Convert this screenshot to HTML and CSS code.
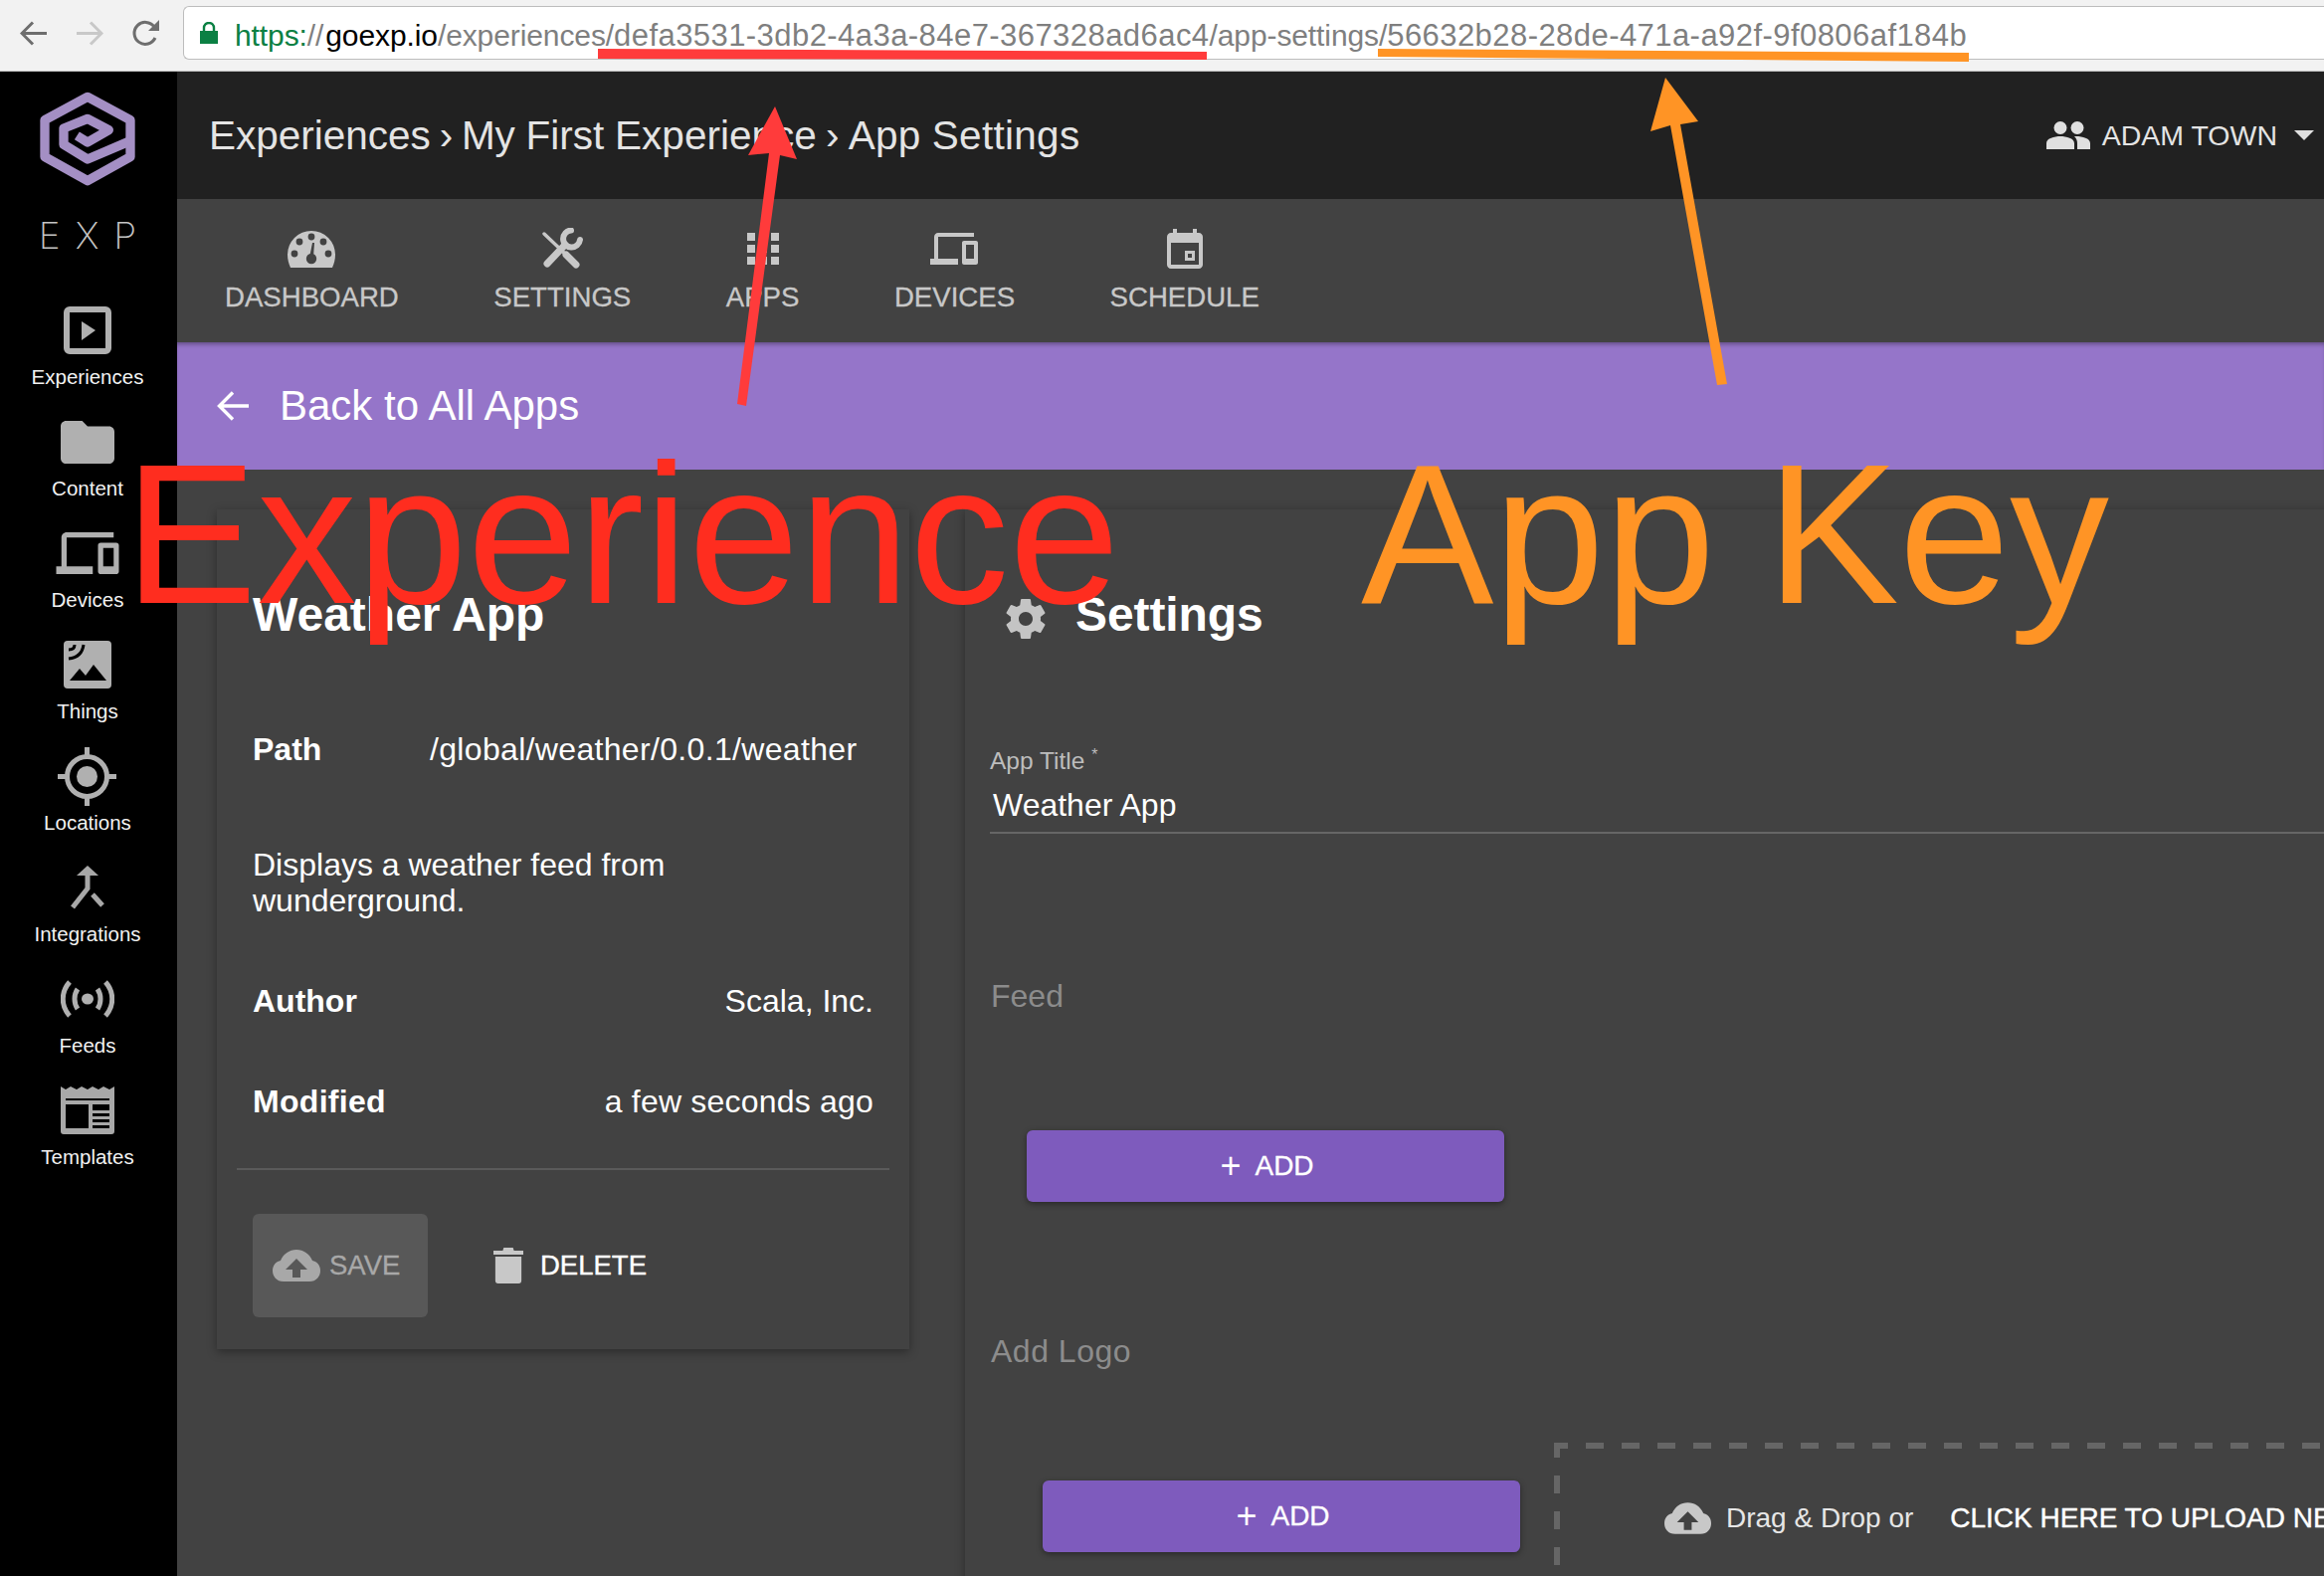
FILE: index.html
```html
<!DOCTYPE html>
<html lang="en">
<head>
<meta charset="utf-8">
<title>App Settings</title>
<link rel="stylesheet" href="styles.css">
</head>
<body>
<div class="page">
  <div class="browser">
    <svg class="nav-icon nav-back" viewBox="0 0 27 25"><path d="M13 1.5 2 12.5l11 11M2 12.5h25" fill="none" stroke="#6e6e6e" stroke-width="3"/></svg>
    <svg class="nav-icon nav-forward" viewBox="0 0 27 25"><path d="M14 1.5l11 11-11 11M25 12.5H0" fill="none" stroke="#c8c8c8" stroke-width="3"/></svg>
    <svg class="nav-icon nav-reload" viewBox="0 0 27 27"><path d="M23 18a11 11 0 1 1-1-11" fill="none" stroke="#6e6e6e" stroke-width="3"/><path d="M27 0v11H16z" fill="#6e6e6e"/></svg>
    <div class="address">
      <svg class="lock" viewBox="0 0 18 22"><path d="M0 9h18v13H0z" fill="#0b8043"/><path d="M4 10V6a5 5 0 0 1 10 0v4" fill="none" stroke="#0b8043" stroke-width="2.4"/></svg>
      <span class="url"><span class="url-green">https:</span>//<span class="url-host">goexp.io</span>/experiences/<span class="uuid">defa3531-3db2-4a3a-84e7-367328ad6ac4</span>/app-settings/<span class="uuid">56632b28-28de-471a-a92f-9f0806af184b</span></span>
    </div>
  </div>

  <div class="app">
    <nav class="sidebar">
      <div class="brand">
        <svg class="logo" viewBox="60 37 288 285"><g fill="none" stroke="#a48fc4" stroke-width="28" stroke-linejoin="round"><path d="M204 53 333 123V234L204 306 75 234V123Z"/><path d="M333 186 204 241 132 197V148L204 119 268 153 204 190 172 170"/></g></svg>
        <div class="brand-name">EXP</div>
      </div>
      <a class="side-item"><span class="side-icon"><svg width="48" height="48" viewBox="0 0 48 48"><rect x="3" y="3" width="42" height="42" rx="3" fill="none" stroke="#b0b0b0" stroke-width="6"/><path d="M18 15l14 9-14 10z" fill="#b0b0b0"/></svg></span><span class="side-label">Experiences</span></a>
      <a class="side-item"><span class="side-icon"><svg width="54" height="43" viewBox="2 4 20 16" preserveAspectRatio="none"><path fill="#b0b0b0" d="M10 4H4c-1.1 0-1.99.9-1.99 2L2 18c0 1.1.9 2 2 2h16c1.1 0 2-.9 2-2V8c0-1.1-.9-2-2-2h-8l-2-2z"/></svg></span><span class="side-label">Content</span></a>
      <a class="side-item"><span class="side-icon"><svg width="64" height="42" viewBox="0 4 24 16"><path fill="#b0b0b0" d="M4 6h18V4H4c-1.1 0-2 .9-2 2v11H0v3h14v-3H4V6zm19 2h-6c-.55 0-1 .45-1 1v10c0 .55.45 1 1 1h6c.55 0 1-.45 1-1V9c0-.55-.45-1-1-1zm-1 9h-4v-7h4v7z"/></svg></span><span class="side-label">Devices</span></a>
      <a class="side-item"><span class="side-icon"><svg width="48" height="48" viewBox="0 0 48 48"><rect width="48" height="48" rx="4" fill="#b0b0b0"/><path d="M6 40 16 28l6 7 8-11 13 16z" fill="#000"/><path d="M5 18C14 17 19 12 20 4M5 9C9 9 11 7 11 4" fill="none" stroke="#000" stroke-width="3"/></svg></span><span class="side-label">Things</span></a>
      <a class="side-item"><span class="side-icon"><svg width="59" height="59" viewBox="0 0 59 59"><circle cx="29.5" cy="29.5" r="20" fill="none" stroke="#b0b0b0" stroke-width="5"/><circle cx="29.5" cy="29.5" r="10.5" fill="#b0b0b0"/><path d="M29.5 0v10M29.5 49v10M0 29.5h10M49 29.5h10" stroke="#b0b0b0" stroke-width="5"/></svg></span><span class="side-label">Locations</span></a>
      <a class="side-item"><span class="side-icon"><svg width="34" height="45" viewBox="0 0 34 45"><path d="M17 0 28 10H6z" fill="#a8a8a8"/><path d="M17 9V23L2 42M22 29l10 11" fill="none" stroke="#a8a8a8" stroke-width="5"/></svg></span><span class="side-label">Integrations</span></a>
      <a class="side-item"><span class="side-icon"><svg width="54" height="38" viewBox="0 0 54 38"><ellipse cx="27" cy="19" rx="6" ry="5.5" fill="#b0b0b0"/><path d="M9 2C0 12 0 26 9 36M45 2C54 12 54 26 45 36M17 9c-4 6-4 14 0 20M37 9c4 6 4 14 0 20" fill="none" stroke="#b0b0b0" stroke-width="5"/></svg></span><span class="side-label">Feeds</span></a>
      <a class="side-item"><span class="side-icon"><svg width="54" height="48" viewBox="0 0 54 48"><path d="M0 0l5 3 5-3 6 3 5-3 6 3 5-3 6 3 5-3 6 3 5-3v45a3 3 0 0 1-3 3H3a3 3 0 0 1-3-3z" fill="#a8a8a8"/><path d="M5 12h44v30H5z" fill="#000"/><path d="M5 14h44v4H5zM28 18h4v24h-4zM32 24h17v3H32zM32 30h17v3H32zM32 36h17v3H32z" fill="#a8a8a8"/></svg></span><span class="side-label">Templates</span></a>
    </nav>

    <main class="main">
      <header class="topbar">
        <div class="crumbs">Experiences <span class="sep">›</span> My First Experience <span class="sep-last">›</span> <span class="crumb-last">App Settings</span></div>
        <div class="user">
          <svg class="user-icon" width="44" height="28" viewBox="0 0 44 28"><circle cx="14" cy="6.5" r="6.5" fill="#e0e0e0"/><circle cx="31" cy="6.5" r="6.5" fill="#e0e0e0"/><path d="M0 28v-6c0-5 8-7 14-7s14 2 14 7v6zM30 15c6 0 14 2 14 7v6H31v-6c0-3-1-5-3-7z" fill="#e0e0e0"/></svg>
          <span>ADAM TOWN</span>
          <span class="caret"></span>
        </div>
      </header>

      <div class="tabs">
        <a class="tab"><span class="tab-icon"><svg width="48" height="38" viewBox="0 0 48 38"><path d="M3 38C1 34 0 29 0 25a24 24 0 0 1 48 0c0 4-1 9-3 13z" fill="#c8c8c8"/><g fill="#424242"><circle cx="24" cy="7" r="3.4"/><circle cx="12" cy="12" r="3.4"/><circle cx="36" cy="12" r="3.4"/><circle cx="7" cy="24" r="3.4"/><circle cx="41" cy="24" r="3.4"/><circle cx="24" cy="29" r="5.2"/><path d="M22 28l3-15h2l-1 15z"/></g></svg></span><span>DASHBOARD</span></a>
        <a class="tab"><span class="tab-icon"><svg width="42" height="42" viewBox="0 0 42 42"><g fill="none" stroke="#c8c8c8" stroke-linecap="round"><path d="M3 6l21 20" stroke-width="3.4"/><path d="M25 27l10 10" stroke-width="7"/><path d="M6 36 24 17" stroke-width="7"/><path d="M30 2.500A8.500 8.500 0 1 0 39 12" stroke-width="6"/></g></svg></span><span>SETTINGS</span></a>
        <a class="tab"><span class="tab-icon"><svg width="32" height="32" viewBox="4 4 16 16"><path fill="#c8c8c8" d="M4 8h4V4H4v4zm6 12h4v-4h-4v4zm-6 0h4v-4H4v4zm0-6h4v-4H4v4zm6 0h4v-4h-4v4zm6-10v4h4V4h-4zm-6 4h4V4h-4v4zm6 6h4v-4h-4v4zm0 6h4v-4h-4v4z"/></svg></span><span>APPS</span></a>
        <a class="tab"><span class="tab-icon"><svg width="48" height="32" viewBox="0 4 24 16"><path fill="#c8c8c8" d="M4 6h18V4H4c-1.1 0-2 .9-2 2v11H0v3h14v-3H4V6zm19 2h-6c-.55 0-1 .45-1 1v10c0 .55.45 1 1 1h6c.55 0 1-.45 1-1V9c0-.55-.45-1-1-1zm-1 9h-4v-7h4v7z"/></svg></span><span>DEVICES</span></a>
        <a class="tab"><span class="tab-icon"><svg width="36" height="40" viewBox="3 1 18 20"><path fill="#c8c8c8" fill-rule="evenodd" d="M17 12h-5v5h5v-5zM15.500 13.500h-2v2h2zM16 1v2H8V1H6v2H5c-1.110 0-1.990.9-1.990 2L3 19c0 1.100.890 2 2 2h14c1.100 0 2-.9 2-2V5c0-1.100-.9-2-2-2h-1V1h-2zm3 18H5V8h14v11z"/></svg></span><span>SCHEDULE</span></a>
      </div>

      <div class="backbar">
        <svg width="32" height="30" viewBox="0 0 32 30"><path d="M16 1.500 2.500 15 16 28.500M3 15h29" fill="none" stroke="#fff" stroke-width="3.400"/></svg>
        <span>Back to All Apps</span>
      </div>

      <div class="content">
        <section class="card">
          <h2 class="card-title">Weather App</h2>
          <div class="row row-path"><b>Path</b><span class="path-value">/global/weather/0.0.1/weather</span></div>
          <p class="desc">Displays a weather feed from<br>wunderground.</p>
          <div class="row row-author"><b>Author</b><span>Scala, Inc.</span></div>
          <div class="row row-modified"><b class="modified-key">Modified</b><span class="modified-value">a few seconds ago</span></div>
          <hr class="divider">
          <div class="actions">
            <div class="btn-save">
              <svg width="48" height="32" viewBox="0 0 48 32"><path d="M11 32C4 32 0 27 0 21c0-5 3-9 8-10C11 4 17 0 24 0s13 4 16 11c5 1 8 5 8 10 0 6-4 11-11 11z" fill="#a8a8a8"/><path d="M24 9l11 11h-7v8h-8v-8h-7z" fill="#585858"/></svg>
              <span>SAVE</span>
            </div>
            <div class="btn-delete">
              <svg width="30" height="36" viewBox="0 0 32 36" preserveAspectRatio="none"><path d="M0 3h10l1-3h10l1 3h10v4H0zM2 9h28v24a3 3 0 0 1-3 3H5a3 3 0 0 1-3-3z" fill="#c8c8c8"/></svg>
              <span>DELETE</span>
            </div>
          </div>
        </section>

        <section class="panel">
          <div class="panel-head">
            <svg width="40" height="40" viewBox="2 2 20 20"><path fill="#c4c4c4" d="M19.430 12.980c.04-.32.070-.64.070-.98s-.03-.66-.07-.98l2.110-1.650c.19-.15.240-.42.120-.64l-2-3.460c-.12-.22-.39-.3-.61-.22l-2.490 1c-.52-.4-1.080-.73-1.690-.98l-.38-2.650C14.460 2.180 14.250 2 14 2h-4c-.25 0-.46.18-.49.420l-.38 2.650c-.61.25-1.170.59-1.690.98l-2.490-1c-.23-.09-.49 0-.61.22l-2 3.460c-.13.220-.07.490.12.640l2.110 1.650c-.04.32-.07.650-.07.980s.03.660.07.980l-2.110 1.650c-.19.150-.24.420-.12.640l2 3.460c.12.220.39.300.61.220l2.490-1c.52.400 1.080.730 1.690.980l.38 2.650c.03.240.24.420.49.420h4c.25 0 .46-.18.49-.42l.38-2.650c.61-.25 1.170-.59 1.690-.98l2.490 1c.23.090.49 0 .61-.22l2-3.460c.12-.22.070-.49-.12-.64l-2.110-1.650zM12 15.500c-1.930 0-3.500-1.570-3.500-3.500s1.570-3.500 3.500-3.500 3.500 1.570 3.500 3.500-1.570 3.500-3.500 3.500z"/></svg>
            <h2>Settings</h2>
          </div>
          <label class="field-label">App Title <sup>*</sup></label>
          <div class="field-value">Weather App</div>
          <div class="section-label section-feed">Feed</div>
          <div class="btn-add btn-add-feed"><span class="plus">+</span><span>ADD</span></div>
          <div class="section-label section-logo">Add Logo</div>
          <div class="logo-row">
            <div class="btn-add btn-add-logo"><span class="plus">+</span><span>ADD</span></div>
            <div class="dropzone">
              <svg width="47" height="32" viewBox="0 0 48 32"><path d="M11 32C4 32 0 27 0 21c0-5 3-9 8-10C11 4 17 0 24 0s13 4 16 11c5 1 8 5 8 10 0 6-4 11-11 11z" fill="#c8c8c8"/><path d="M24 9l11 11h-7v8h-8v-8h-7z" fill="#424242"/></svg>
              <span class="drop-text">Drag &amp; Drop or</span>
              <span class="drop-link">CLICK HERE TO UPLOAD NEW</span>
            </div>
          </div>
        </section>
      </div>
    </main>
  </div>

  <svg class="marks" viewBox="0 0 2336 1584" width="2336" height="1584">
    <path class="mark-red" d="M601 49 1213 52V60L601 59Z"/>
    <path class="mark-orange" d="M1385 49 1979 53V62L1385 57Z"/>
    <path class="mark-red" d="M779 107 801 160 784 156 750 408 741 406 773 154 752 156Z"/>
    <path class="mark-orange" d="M1674 78 1707 122 1689 125 1736 386 1726 387 1679 126 1659 132Z"/>
  </svg>
  <div class="big big-red">Experience</div>
  <div class="big big-orange">App Key</div>
</div>
</body>
</html>
```

FILE: styles.css
```css
* { box-sizing: border-box; }
html, body { margin: 0; height: 100%; }
body {
  background: #424242;
  font-family: "Liberation Sans", Arial, sans-serif;
  color: #fff;
  overflow: hidden;
}
.page { position: relative; width: 2336px; height: 1584px; overflow: hidden; display: flex; flex-direction: column; }

/* browser chrome */
.browser {
  height: 72px;
  flex: none;
  background: #f2f2f2;
  border-bottom: 1px solid #bdbdbd;
  display: flex;
  align-items: center;
  padding: 0 0 5px 20px;
}
.nav-icon { flex: none; width: 27px; height: 25px; }
.nav-back { margin-right: 30px; }
.nav-forward { margin-right: 29px; }
.nav-reload { margin-right: 24px; height: 27px; }
.address {
  flex: 1;
  height: 54px;
  background: #fff;
  border: 1px solid #bdbdbd;
  border-right: 0;
  border-radius: 6px 0 0 6px;
  display: flex;
  align-items: center;
  padding-left: 16px;
  margin-right: -10px;
}
.lock { width: 18px; height: 22px; margin-right: 17px; }
.url { font-size: 30px; letter-spacing: -.1px; color: #7f7f7f; white-space: nowrap; padding-top: 5px; }
.uuid { font-size: 31px; letter-spacing: .44px; }
.url-green { color: #0b8043; }
.url-host { color: #000; margin-left: 2px; }

/* layout */
.app { flex: 1; display: flex; min-height: 0; }
.sidebar { width: 178px; flex: none; padding-right: 2px; background: #000; display: flex; flex-direction: column; align-items: center; }
.brand { height: 228px; padding-top: 20px; flex: none; display: flex; flex-direction: column; align-items: center; }
.logo { width: 96px; height: 95px; }
.brand-name {
  font-family: Inter, sans-serif;
  font-weight: 200;
  font-size: 37px;
  line-height: 30px;
  letter-spacing: 15px;
  margin: 35px -15px 0 0;
  color: #c4c4c4;
}
.side-item { height: 112px; flex: none; display: flex; flex-direction: column; align-items: center; }
.side-icon { height: 64px; display: flex; align-items: center; justify-content: center; }
.side-label { font-size: 20.5px; line-height: 24px; margin-top: 3px; color: #f2f2f2; }

.main { flex: 1; min-width: 0; display: flex; flex-direction: column; }
.topbar {
  height: 128px;
  flex: none;
  background: #212121;
  display: flex;
  align-items: center;
  justify-content: space-between;
  padding: 0 10px 0 32px;
  color: #e4e4e4;
}
.crumbs { font-size: 40.5px; word-spacing: -.5px; }
.sep { margin: 0 -2px; }
.sep-last { margin: 0 -1.5px; }
.crumb-last { letter-spacing: .3px; }
.user { display: flex; align-items: center; font-size: 28.5px; }
.user-icon { margin-right: 12px; }
.caret {
  width: 0; height: 0;
  margin-left: 17px;
  border-left: 10px solid transparent;
  border-right: 10px solid transparent;
  border-top: 10px solid #e0e0e0;
}

.tabs {
  height: 144px;
  flex: none;
  background: #424242;
  display: flex;
  gap: 95.5px;
  padding-left: 48px;
  color: #c8c8c8;
  font-size: 27.6px;
}
.tab { display: flex; flex-direction: column; align-items: center; -webkit-text-stroke: .3px #c8c8c8; }
.tab-icon { height: 42px; margin-top: 29px; display: flex; align-items: center; justify-content: center; }
.tab > span:last-child { line-height: 32px; margin-top: 12px; }

.backbar {
  height: 128px;
  flex: none;
  background: #9575c9;
  box-shadow: inset 0 4px 4px -2px rgba(0, 0, 0, .35);
  display: flex;
  align-items: center;
  gap: 31px;
  padding-left: 40px;
  font-size: 42px;
}

.content { flex: 1; display: flex; align-items: flex-start; padding: 40px 0 0 40px; min-height: 0; }
.card {
  width: 696px;
  height: 844px;
  flex: none;
  padding: 81px 36px 0;
  background: #424242;
  box-shadow: 0 3px 9px rgba(0, 0, 0, .35);
  font-size: 32px;
}
.card-title { font-size: 48px; line-height: 50px; margin: 0; font-weight: 700; }
.row { display: flex; justify-content: space-between; line-height: 40px; }
.row-path { margin-top: 90px; justify-content: flex-start; }
.row-path b { width: 178px; }
.path-value { letter-spacing: .33px; }
.desc { margin: 78px 0 0; line-height: 36px; }
.row-author { margin-top: 63px; }
.row-modified { margin-top: 61px; }
.modified-key { letter-spacing: .3px; }
.modified-value { letter-spacing: .2px; }
.divider { height: 2px; margin: 47px -16px 0; border: 0; background: #5a5a5a; }
.actions { display: flex; align-items: center; margin-top: 44px; font-size: 27.5px; }
.btn-save {
  width: 176px;
  height: 104px;
  background: #585858;
  border-radius: 6px;
  display: flex;
  align-items: center;
  gap: 9px;
  padding-left: 20px;
  color: #a8a8a8;
  -webkit-text-stroke: .3px #a8a8a8;
}
.btn-delete { display: flex; align-items: center; gap: 17px; margin-left: 66px; -webkit-text-stroke: .4px #fff; }

.panel {
  flex: 1;
  height: 1100px;
  margin-left: 56px;
  padding: 90px 0 0 25px;
  background: #424242;
  box-shadow: 0 2px 9px rgba(0, 0, 0, .35);
  font-size: 32px;
}
.panel-head { display: flex; align-items: center; height: 40px; padding-left: 16px; gap: 30px; }
.panel-head h2 { font-size: 48px; line-height: 50px; margin: 0 0 9px; font-weight: 700; letter-spacing: -.1px; }
.field-label { display: block; margin-top: 109px; font-size: 24.5px; line-height: 28px; color: #bdbdbd; }
.field-label sup { font-size: 16px; line-height: 0; }
.field-value { margin-top: 12px; padding: 0 0 9px 3px; line-height: 36px; border-bottom: 2px solid #666; }
.section-label { line-height: 40px; color: #8c8c8c; padding-left: 1px; }
.section-feed { margin-top: 143px; }
.section-logo { margin-top: 130px; letter-spacing: .5px; }
.btn-add {
  width: 480px;
  height: 72px;
  background: #7e5bbd;
  border-radius: 6px;
  box-shadow: 0 2px 6px rgba(0, 0, 0, .4);
  display: flex;
  align-items: center;
  justify-content: center;
  gap: 14px;
  padding-left: 3px;
  font-size: 28px;
  -webkit-text-stroke: .3px #fff;
}
.plus { font-size: 36px; font-weight: 400; -webkit-text-stroke: 0; line-height: 1; }
.btn-add-feed { margin: 115px 0 0 37px; }
.logo-row { display: flex; align-items: flex-start; margin-top: 72px; }
.btn-add-logo { flex: none; margin: 38px 0 0 53px; }
.dropzone {
  flex: 1;
  height: 143px;
  margin-left: 34px;
  padding: 60px 0 0 111px;
  display: flex;
  align-items: flex-start;
  white-space: nowrap;
  font-size: 28px;
  background:
    linear-gradient(90deg, #666 50%, transparent 50%) 32px 0 / 36px 6px repeat-x,
    linear-gradient(180deg, #666 50%, transparent 50%) 0 33px / 6px 36px repeat-y;
}
.drop-text { margin-left: 15px; color: #e6e6e6; }
.drop-link { margin-left: 37px; -webkit-text-stroke: .4px #fff; }

/* annotations drawn over the screenshot */
.marks { position: absolute; left: 0; top: 0; pointer-events: none; }
.mark-red { fill: #ff3b3b; }
.mark-orange { fill: #ff9425; }
.big {
  position: absolute;
  top: 437px;
  font-size: 200px;
  line-height: 200px;
  white-space: nowrap;
}
.big-red { left: 125px; color: #ff2d1f; }
.big-orange { left: 1368px; color: #ff9425; word-spacing: -4px; }
```
